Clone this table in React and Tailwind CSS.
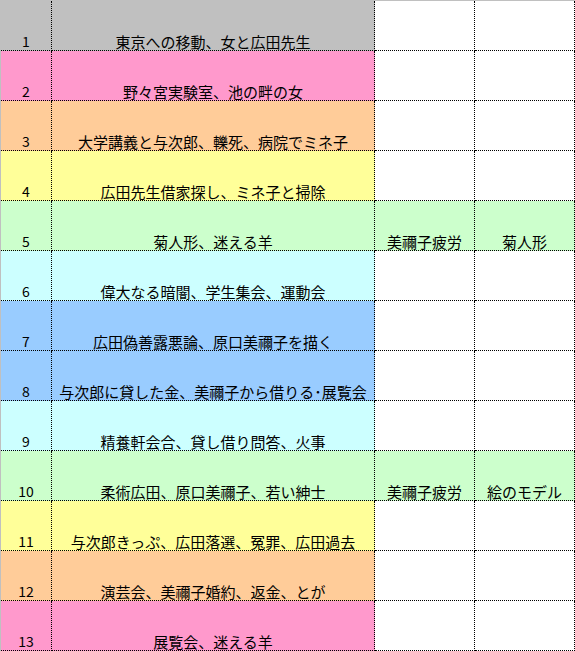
import React from "react";

const rows = [
  { n: "1", t: "東京への移動、女と広田先生", bg: "bg-[#c0c0c0]" },
  { n: "2", t: "野々宮実験室、池の畔の女", bg: "bg-[#ff99cc]" },
  { n: "3", t: "大学講義と与次郎、轢死、病院でミネ子", bg: "bg-[#ffcc99]" },
  { n: "4", t: "広田先生借家探し、ミネ子と掃除", bg: "bg-[#ffff99]" },
  { n: "5", t: "菊人形、迷える羊", bg: "bg-[#ccffcc]", c: "美禰子疲労", d: "菊人形", full: true },
  { n: "6", t: "偉大なる暗闇、学生集会、運動会", bg: "bg-[#ccffff]" },
  { n: "7", t: "広田偽善露悪論、原口美禰子を描く", bg: "bg-[#99ccff]" },
  { n: "8", t: "与次郎に貸した金、美禰子から借りる･展覧会", bg: "bg-[#99ccff]" },
  { n: "9", t: "精養軒会合、貸し借り問答、火事", bg: "bg-[#ccffff]" },
  { n: "10", t: "柔術広田、原口美禰子、若い紳士", bg: "bg-[#ccffcc]", c: "美禰子疲労", d: "絵のモデル", full: true },
  { n: "11", t: "与次郎きっぷ、広田落選、冤罪、広田過去", bg: "bg-[#ffff99]" },
  { n: "12", t: "演芸会、美禰子婚約、返金、とが", bg: "bg-[#ffcc99]" },
  { n: "13", t: "展覧会、迷える羊", bg: "bg-[#ff99cc]" },
];

const cell = "h-[50px] border-r border-b border-dotted border-black flex items-end justify-center whitespace-nowrap";

export default function App() {
  return (
    <div
      className="w-[575px] h-[651px] bg-white border-t border-l border-[#c0c0c0] text-black overflow-hidden"
      style={{ fontFamily: '"Noto Sans CJK JP", "Noto Sans", sans-serif' }}
    >
      {rows.map((r) => (
        <div key={r.n} className="flex">
          <div className={`${cell} w-[51px] ${r.bg} text-[14px] leading-[16px] pb-[1px]`}>{r.n}</div>
          <div className={`${cell} w-[323px] ${r.bg} text-[15px] leading-[16px]`}>{r.t}</div>
          <div className={`${cell} w-[100px] ${r.full ? r.bg : "bg-white"} text-[15px] leading-[16px]`}>{r.c || ""}</div>
          <div className={`${cell} w-[100px] ${r.full ? r.bg : "bg-white"} text-[15px] leading-[16px]`}>{r.d || ""}</div>
        </div>
      ))}
    </div>
  );
}
